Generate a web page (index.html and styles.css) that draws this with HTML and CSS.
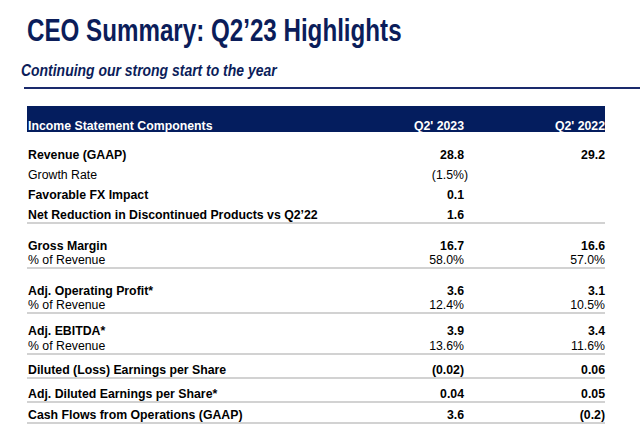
FILE: index.html
```html
<!DOCTYPE html>
<html lang="en">
<head>
<meta charset="utf-8">
<title>CEO Summary: Q2'23 Highlights</title>
<link rel="stylesheet" href="styles.css">
</head>
<body>
<div class="page">
  <h1 class="title"><span class="title-text">CEO Summary: Q2’23 Highlights</span></h1>
  <p class="subtitle"><span class="subtitle-text">Continuing our strong start to the year</span></p>
  <div class="rule"></div>

  <div class="table">
    <div class="row head">
      <span>Income Statement Components</span>
      <span class="num">Q2' 2023</span>
      <span class="num">Q2' 2022</span>
    </div>

    <div class="group gap-10 spaced">
      <div class="row b"><span>Revenue (GAAP)</span><span class="num">28.8</span><span class="num">29.2</span></div>
      <div class="row"><span>Growth Rate</span><span class="num"><span class="neg-hang">(1.5%)</span></span><span class="num"></span></div>
      <div class="row b"><span>Favorable FX Impact</span><span class="num">0.1</span><span class="num"></span></div>
      <div class="row b"><span>Net Reduction in Discontinued Products vs Q2’22</span><span class="num">1.6</span><span class="num"></span></div>
    </div>

    <div class="group gap-16">
      <div class="row b"><span>Gross Margin</span><span class="num">16.7</span><span class="num">16.6</span></div>
      <div class="row sub"><span>% of Revenue</span><span class="num">58.0%</span><span class="num">57.0%</span></div>
    </div>

    <div class="group gap-16">
      <div class="row b"><span>Adj. Operating Profit*</span><span class="num">3.6</span><span class="num">3.1</span></div>
      <div class="row sub"><span>% of Revenue</span><span class="num">12.4%</span><span class="num">10.5%</span></div>
    </div>

    <div class="group gap-11">
      <div class="row b"><span>Adj. EBITDA*</span><span class="num">3.9</span><span class="num">3.4</span></div>
      <div class="row sub2"><span>% of Revenue</span><span class="num">13.6%</span><span class="num">11.6%</span></div>
    </div>

    <div class="group gap-9">
      <div class="row b"><span>Diluted (Loss) Earnings per Share</span><span class="num">(0.02)</span><span class="num">0.06</span></div>
    </div>

    <div class="group gap-9">
      <div class="row b"><span>Adj. Diluted Earnings per Share*</span><span class="num">0.04</span><span class="num">0.05</span></div>
    </div>

    <div class="group gap-6">
      <div class="row b"><span>Cash Flows from Operations (GAAP)</span><span class="num">3.6</span><span class="num">(0.2)</span></div>
    </div>
  </div>
</div>
</body>
</html>
```

FILE: styles.css
```css
* { box-sizing: border-box; }

html, body {
  margin: 0;
  padding: 0;
  background: #ffffff;
}

body {
  width: 640px;
  height: 441px;
  overflow: hidden;
  font-family: "Liberation Sans", Arial, sans-serif;
  color: #000;
}

.title {
  margin: 0;
  padding: 11px 0 0 27px;
  font-weight: 700;
  font-size: 32px;
  line-height: 38px;
  color: #0b1d5a;
  white-space: nowrap;
}

.title-text {
  display: inline-block;
  transform: scaleX(0.755);
  transform-origin: 0 50%;
}

.subtitle {
  margin: 12px 0 0 0;
  padding-left: 21px;
  font-weight: 700;
  font-style: italic;
  font-size: 17px;
  line-height: 20px;
  color: #0b1d5a;
  white-space: nowrap;
}

.subtitle-text {
  display: inline-block;
  transform: scaleX(0.82);
  transform-origin: 0 50%;
}

.rule {
  margin: 6px 0 0 24px;
  height: 2px;
  background: #1a2a6c;
}

.table {
  margin: 17px 0 0 27px;
  width: 578px;
  font-size: 12.3px;
}

.row {
  display: grid;
  grid-template-columns: 1fr 141px 141px;
  line-height: 13px;
  padding-left: 1px;
  white-space: nowrap;
}

.row.b { font-weight: 700; }

.num { text-align: right; }

.neg-hang { margin-right: -4px; }

.head {
  height: 26px;
  align-items: end;
  line-height: 11px;
  background: #041d5e;
  color: #fff;
  font-weight: 700;
}

.group {
  border-bottom: 2px solid #d2d2d2;
}

.group.spaced .row { padding-top: 7px; }

.gap-6 { margin-top: 6px; }
.gap-9 { margin-top: 9px; }
.gap-10 { margin-top: 10px; }
.gap-11 { margin-top: 11px; }
.gap-16 { margin-top: 16px; }

.row.sub { padding-top: 1px; }
.row.sub2 { padding-top: 2px; }
```
